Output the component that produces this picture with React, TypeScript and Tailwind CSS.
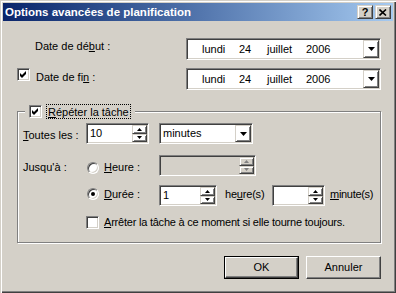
const sunken =
  "border border-t-[#808080] border-l-[#808080] border-b-white border-r-white p-[1px] shadow-[inset_1px_1px_0_#404040,inset_-1px_-1px_0_#d4d0c8]";
const bevel =
  "border border-t-[#d4d0c8] border-l-[#d4d0c8] border-b-[#404040] border-r-[#404040] shadow-[inset_1px_1px_0_#fff,inset_-1px_-1px_0_#808080]";
const pushBtn =
  "border border-t-white border-l-white border-b-[#404040] border-r-[#404040] shadow-[inset_-1px_-1px_0_#808080]";

function DownArrow() {
  return (
    <svg width="7" height="4" viewBox="0 0 7 4">
      <polygon points="0,0 7,0 3.5,4" fill="#000" />
    </svg>
  );
}

function SpinArrow({ up, disabled }: { up: boolean; disabled?: boolean }) {
  return (
    <svg width="5" height="3" viewBox="0 0 5 3">
      <polygon points={up ? "0,3 5,3 2.5,0" : "0,0 5,0 2.5,3"} fill={disabled ? "#808080" : "#000"} />
    </svg>
  );
}

function Checkbox({ checked }: { checked?: boolean }) {
  return (
    <div className={`${sunken} w-[13px] h-[13px] bg-white flex items-center justify-center shrink-0`}>
      {checked && (
        <svg width="7" height="7" viewBox="0 0 7 7">
          <polygon points="0,2 2,4 6,0 6,3 2,7 0,5" fill="#000" />
        </svg>
      )}
    </div>
  );
}

function Radio({ checked }: { checked?: boolean }) {
  return (
    <div className="w-[12px] h-[12px] rounded-full bg-white border border-t-[#808080] border-l-[#808080] border-b-white border-r-white shadow-[inset_1px_1px_0_#404040,inset_-1px_-1px_0_#d4d0c8] flex items-center justify-center shrink-0">
      {checked && <div className="w-[4px] h-[4px] rounded-full bg-black" />}
    </div>
  );
}

function SpinEdit({ className, value, disabled }: { className: string; value?: string; disabled?: boolean }) {
  return (
    <div className={`${sunken} ${className} h-[21px] flex ${disabled ? "bg-[#d4d0c8]" : "bg-white"}`}>
      <span className="flex-1 pl-[2px] leading-[17px]">{value}</span>
      <div className="w-[15px] flex flex-col">
        <div className={`${bevel} flex-1 flex items-center justify-center`}>
          <SpinArrow up disabled={disabled} />
        </div>
        <div className={`${bevel} flex-1 flex items-center justify-center`}>
          <SpinArrow up={false} disabled={disabled} />
        </div>
      </div>
    </div>
  );
}

function DateCombo() {
  return (
    <div className={`${sunken} w-[195px] h-[22px] bg-white flex`}>
      <div className="flex-1 flex items-center pl-[14px]">
        <span className="w-[37px]">lundi</span>
        <span className="w-[28px]">24</span>
        <span className="w-[39px]">juillet</span>
        <span>2006</span>
      </div>
      <div className={`${bevel} w-[16px] flex items-center justify-center`}>
        <DownArrow />
      </div>
    </div>
  );
}

export default function App() {
  return (
    <div className="w-[396px] h-[293px] bg-[#d4d0c8] flex flex-col text-[11px] text-black font-['Liberation_Sans',Arial,sans-serif] shadow-[inset_1px_1px_0_#d4d0c8,inset_2px_2px_0_#fff,inset_-1px_-1px_0_#404040,inset_-2px_-2px_0_#808080]">
      {/* title bar */}
      <div className="mx-[3px] mt-[3px] h-[18px] flex items-center bg-linear-to-r from-[#0a246a] to-[#a6caf0] pl-[2px] pr-[2px]">
        <span className="flex-1 text-white font-bold text-[11.5px] leading-[18px]">Options avancées de planification</span>
        <div className={`${bevel} w-[16px] h-[14px] bg-[#d4d0c8] flex items-center justify-center font-bold text-[11px] leading-none`}>
          ?
        </div>
        <div className={`${bevel} w-[16px] h-[14px] bg-[#d4d0c8] flex items-center justify-center ml-[2px]`}>
          <svg width="8" height="7" viewBox="0 0 8 7">
            <path d="M0.5 0.5 L7 6.5 M7 0.5 L0.5 6.5" stroke="#000" strokeWidth="1.6" />
          </svg>
        </div>
      </div>

      {/* date rows */}
      <div className="mt-[17px] flex items-start h-[22px]">
        <span className="pl-[35px] w-[186px] pt-[2px] leading-[13px]">
          Date de dé<u>b</u>ut :
        </span>
        <DateCombo />
      </div>
      <div className="mt-[8px] flex items-start h-[22px]">
        <div className="pl-[17px] w-[186px] flex items-start">
          <Checkbox checked />
          <span className="ml-[6px] pt-[3px] leading-[13px]">
            Date de fi<u>n</u> :
          </span>
        </div>
        <DateCombo />
      </div>

      {/* repeat group */}
      <fieldset className="mt-[13px] ml-[17px] w-[364px] border border-[#808080] shadow-[inset_1px_1px_0_#fff,1px_1px_0_#fff]">
        <legend className="ml-[7px] px-[4px] bg-[#d4d0c8] h-[16px] flex items-center">
          <Checkbox checked />
          <span className="ml-[4px] px-[1px] h-[15px] leading-[15px] border border-dotted border-black">
            <u>R</u>épéter la tâche
          </span>
        </legend>
        <div className="pt-[4px] pb-[13px] flex flex-col">
          <div className="flex items-center h-[21px]">
            <span className="pl-[5px] w-[68px] pt-[3px]">
              <u>T</u>outes les :
            </span>
            <SpinEdit className="w-[63px]" value="10" />
            <div className={`${sunken} ml-[10px] w-[94px] h-[21px] bg-white flex`}>
              <span className="flex-1 pl-[2px] leading-[17px]">minutes</span>
              <div className={`${bevel} w-[16px] flex items-center justify-center`}>
                <DownArrow />
              </div>
            </div>
          </div>

          <div className="mt-[11px] flex items-start h-[21px]">
            <span className="pl-[5px] w-[69px] mt-[6px] leading-[13px]">Jusqu'à :</span>
            <div className="mt-[7px]">
              <Radio />
            </div>
            <span className="ml-[5px] w-[55px] mt-[6px] leading-[13px]">
              <u>H</u>eure :
            </span>
            <SpinEdit className="w-[97px]" disabled />
          </div>

          <div className="mt-[9px] flex items-start h-[21px]">
            <div className="w-[69px]" />
            <div className="mt-[3px]">
              <Radio checked />
            </div>
            <span className="ml-[5px] w-[55px] mt-[3px] leading-[13px]">
              <u>D</u>urée :
            </span>
            <SpinEdit className="w-[58px]" value="1" />
            <span className="ml-[8px] w-[47px] mt-[3px] leading-[13px] tracking-[-0.2px]">
              he<u>u</u>re(s)
            </span>
            <SpinEdit className="w-[53px]" />
            <span className="ml-[5px] mt-[3px] leading-[13px] tracking-[-0.3px]">
              <u>m</u>inute(s)
            </span>
          </div>

          <div className="mt-[10px] flex items-start h-[13px]">
            <div className="w-[68px]" />
            <Checkbox />
            <span className="ml-[5px] leading-[13px] tracking-[-0.22px]">
              <u>A</u>rrêter la tâche à ce moment si elle tourne toujours.
            </span>
          </div>
        </div>
      </fieldset>

      {/* buttons */}
      <div className="mt-[13px] flex h-[23px] pl-[224px]">
        <div className="w-[75px] h-[23px] border border-black">
          <div className={`${pushBtn} w-full h-full flex items-center justify-center`}>OK</div>
        </div>
        <div className={`${pushBtn} ml-[7px] w-[75px] h-[23px] flex items-center justify-center`}>Annuler</div>
      </div>
    </div>
  );
}
